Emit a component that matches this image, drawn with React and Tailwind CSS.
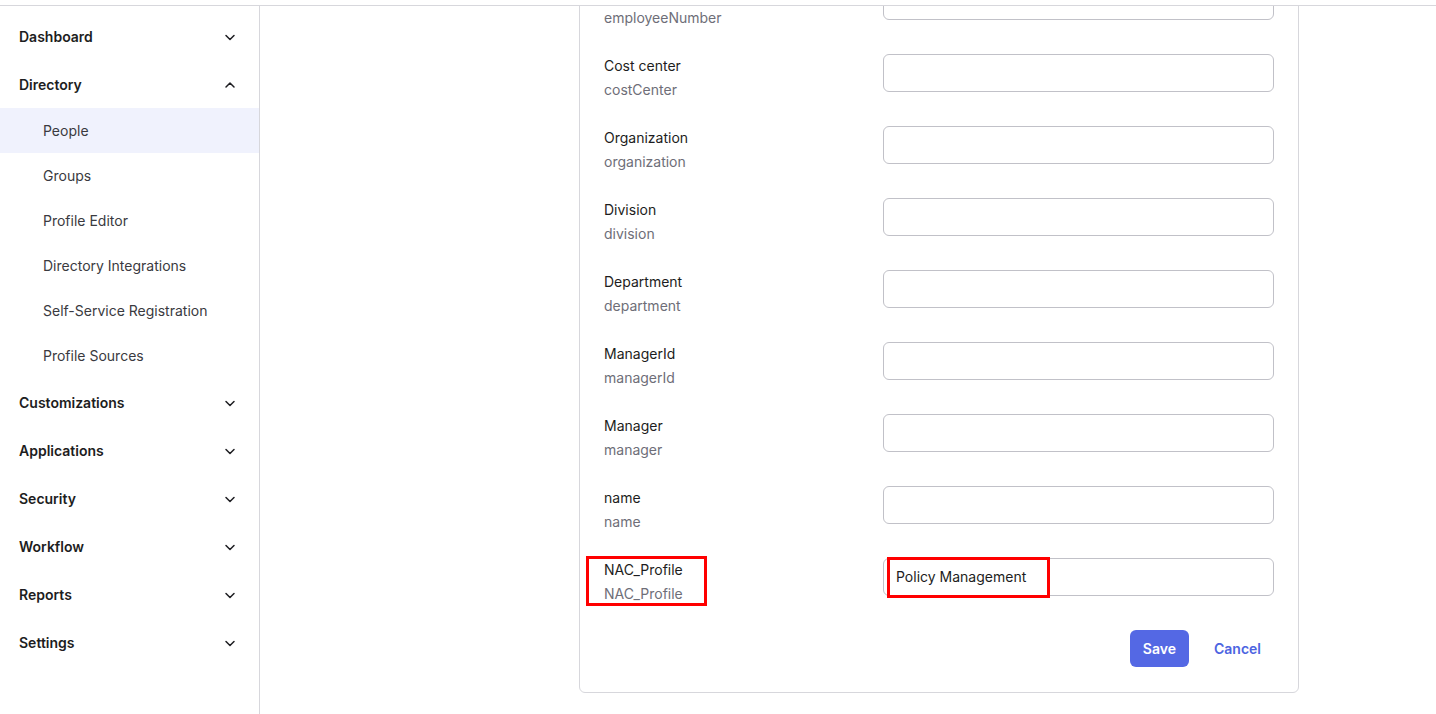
import React from 'react';

const Chevron = ({ up }) => (
  <svg width="12" height="12" viewBox="0 0 12 12" fill="none" className="text-[#1d1d21]">
    <path
      d={up ? 'M2 8l4-4 4 4' : 'M2 4.5l4 4 4-4'}
      stroke="currentColor"
      strokeWidth="1.5"
      strokeLinecap="round"
      strokeLinejoin="round"
    />
  </svg>
);

const NavHeading = ({ label, open }) => (
  <div className="h-12 flex items-center justify-between pl-[19px] pr-[23px] text-sm font-semibold text-[#1d1d21]">
    <span>{label}</span>
    <Chevron up={open} />
  </div>
);

const NavItem = ({ label, active }) => (
  <div
    className={
      'h-[45px] flex items-center pl-[43px] text-sm text-[#3a3a40] ' +
      (active ? 'bg-[#f0f2fd]' : '')
    }
  >
    {label}
  </div>
);

const fields = [
  ['Employee number', 'employeeNumber'],
  ['Cost center', 'costCenter'],
  ['Organization', 'organization'],
  ['Division', 'division'],
  ['Department', 'department'],
  ['ManagerId', 'managerId'],
  ['Manager', 'manager'],
  ['name', 'name'],
];

const FieldRow = ({ label, attr, value, marked }) => (
  <div className="flex items-start h-12">
    <div className="relative w-[279px] leading-6 text-sm">
      <div className="text-[#1d1d21]">{label}</div>
      <div className="text-[#6e6e78]">{attr}</div>
      {marked && (
        <div className="absolute -left-[18px] -top-[2px] w-[121px] h-[50px] border-[3px] border-[#ff0000]" />
      )}
    </div>
    <div className="relative flex-1">
      <div className="h-[38px] border border-[#c1c1c8] rounded-md flex items-center px-3 text-sm text-[#1d1d21]">
        {value}
      </div>
      {marked && (
        <div className="absolute left-[4px] -top-[1px] w-[163px] h-[41px] border-[3px] border-[#ff0000]" />
      )}
    </div>
  </div>
);

export default function App() {
  return (
    <div
      className="h-[714px] w-[1436px] overflow-hidden bg-white flex flex-col"
      style={{ fontFamily: 'Inter, "Noto Sans", sans-serif' }}
    >
      <div className="h-[6px] shrink-0 border-b border-[#d7d7dc]" />
      <div className="flex flex-1 min-h-0">
        {/* Sidebar */}
        <aside className="w-[260px] shrink-0 border-r border-[#d7d7dc] pt-[7px]">
          <NavHeading label="Dashboard" />
          <div className="h-[47px] flex items-center justify-between pl-[19px] pr-[23px] text-sm font-semibold text-[#1d1d21]">
            <span>Directory</span>
            <Chevron up />
          </div>
          <NavItem label="People" active />
          <NavItem label="Groups" />
          <NavItem label="Profile Editor" />
          <NavItem label="Directory Integrations" />
          <NavItem label="Self-Service Registration" />
          <NavItem label="Profile Sources" />
          <div className="h-px" />
          <NavHeading label="Customizations" />
          <NavHeading label="Applications" />
          <NavHeading label="Security" />
          <NavHeading label="Workflow" />
          <NavHeading label="Reports" />
          <NavHeading label="Settings" />
        </aside>

        {/* Main */}
        <main className="flex-1 overflow-hidden pl-[319px]">
          <div className="w-[720px] -mt-[49px] border border-[#d7d7dc] rounded-md px-6 pt-6 pb-[25px]">
            <div className="flex flex-col gap-6">
              {fields.map(([label, attr]) => (
                <FieldRow key={attr} label={label} attr={attr} />
              ))}
              <FieldRow label="NAC_Profile" attr="NAC_Profile" value="Policy Management" marked />
            </div>
            <div className="flex justify-end items-center gap-[13px] mt-6 pr-[1px]">
              <button className="h-[37px] px-[13px] rounded-md bg-[#5468e4] text-white text-sm font-semibold">
                Save
              </button>
              <button className="h-[37px] px-3 text-sm font-semibold text-[#4c64e1]">
                Cancel
              </button>
            </div>
          </div>
        </main>
      </div>
    </div>
  );
}
